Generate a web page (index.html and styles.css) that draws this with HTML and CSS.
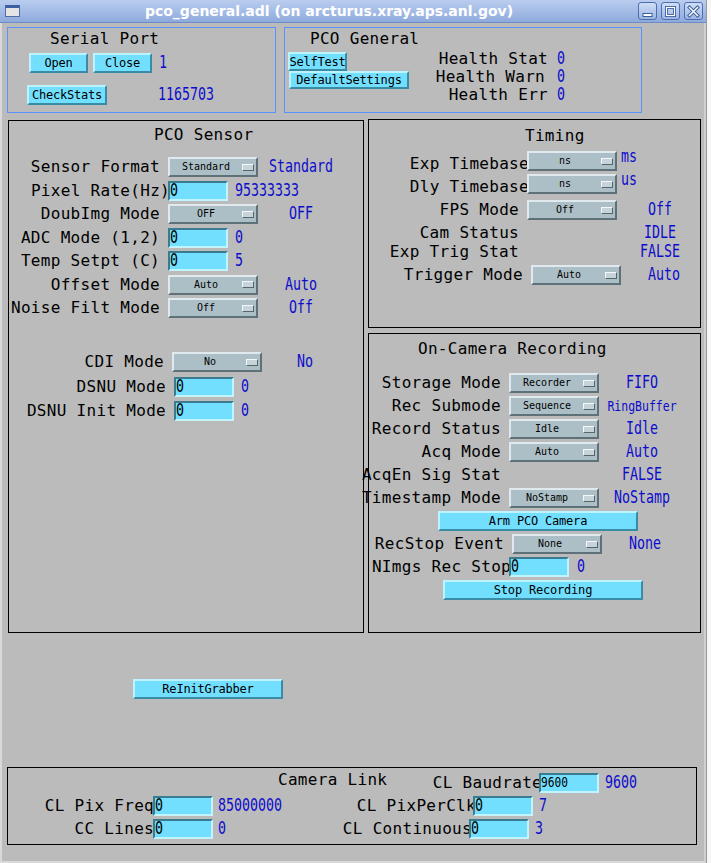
FILE: index.html
```html
<!DOCTYPE html>
<html>
<head>
<meta charset="utf-8">
<title>pco_general.adl</title>
<link rel="stylesheet" href="styles.css">
</head>
<body>
<div class="screen">
  <div class="win">
    <header class="titlebar">
      <span class="winicon"></span>
      <span class="wtitle">pco_general.adl (on arcturus.xray.aps.anl.gov)</span>
      <span class="wbtns">
        <span class="wbtn"><svg width="13" height="13" viewBox="0 0 13 13"><rect x="2" y="8.5" width="9" height="3" fill="#fff" stroke="#3b5c9c" stroke-width="1"/></svg></span>
        <span class="wbtn"><svg width="13" height="13" viewBox="0 0 13 13"><rect x="2.5" y="2.5" width="8" height="8" fill="none" stroke="#3b5c9c" stroke-width="3"/><rect x="2.5" y="2.5" width="8" height="8" fill="none" stroke="#fff" stroke-width="1.2"/></svg></span>
        <span class="wbtn"><svg width="13" height="13" viewBox="0 0 13 13"><path d="M2.5 2.5 L10.5 10.5 M10.5 2.5 L2.5 10.5" stroke="#3b5c9c" stroke-width="3.4" stroke-linecap="square"/><path d="M2.5 2.5 L10.5 10.5 M10.5 2.5 L2.5 10.5" stroke="#fff" stroke-width="1.5" stroke-linecap="square"/></svg></span>
      </span>
    </header>
    <div class="frame">
      <div class="toprow">
        <section class="panel blue serial">
          <div class="ptitle">Serial Port</div>
          <div class="srow s1"><span class="btn w59">Open</span><span class="btn w59 closebtn">Close</span><span class="val sv1">1</span></div>
          <div class="srow s2"><span class="btn w80">CheckStats</span><span class="val sv2">1165703</span></div>
        </section>
        <section class="panel blue general">
          <div class="ptitle">PCO General</div>
          <div class="gbody">
            <div class="gbtns">
              <span class="btn selftest">SelfTest</span>
              <span class="btn defset">DefaultSettings</span>
            </div>
            <div class="health">
              <span class="hl">Health Stat</span><span class="val">0</span>
              <span class="hl warn">Health Warn</span><span class="val">0</span>
              <span class="hl">Health Err</span><span class="val">0</span>
            </div>
          </div>
        </section>
      </div>

      <div class="midrow">
        <section class="panel sensor">
          <div class="ptitle">PCO Sensor</div>
          <div class="rows g1">
            <div class="row"><span class="lbl">Sensor Format</span><span class="menu"><span class="mt">Standard</span><span class="ind"></span></span><span class="val c">Standard</span></div>
            <div class="row"><span class="lbl ov">Pixel Rate(Hz)</span><span class="entry"><span class="et">0</span></span><span class="val l">95333333</span></div>
            <div class="row"><span class="lbl">DoubImg Mode</span><span class="menu"><span class="mt">OFF</span><span class="ind"></span></span><span class="val c">OFF</span></div>
            <div class="row"><span class="lbl">ADC Mode (1,2)</span><span class="entry"><span class="et">0</span></span><span class="val l">0</span></div>
            <div class="row"><span class="lbl">Temp Setpt (C)</span><span class="entry"><span class="et">0</span></span><span class="val l">5</span></div>
            <div class="row"><span class="lbl">Offset Mode</span><span class="menu"><span class="mt">Auto</span><span class="ind"></span></span><span class="val c">Auto</span></div>
            <div class="row"><span class="lbl">Noise Filt Mode</span><span class="menu"><span class="mt">Off</span><span class="ind"></span></span><span class="val c">Off</span></div>
          </div>
          <div class="rows g2">
            <div class="row sh4"><span class="lbl">CDI Mode</span><span class="menu"><span class="mt">No</span><span class="ind"></span></span><span class="val c">No</span></div>
            <div class="row sh6"><span class="lbl">DSNU Mode</span><span class="entry"><span class="et">0</span></span><span class="val l">0</span></div>
            <div class="row sh6"><span class="lbl">DSNU Init Mode</span><span class="entry"><span class="et">0</span></span><span class="val l">0</span></div>
          </div>
        </section>

        <div class="rcol">
          <section class="panel timing">
            <div class="ptitle">Timing</div>
            <div class="rows">
              <div class="row"><span class="lbl ov low">Exp Timebase</span><span class="menu"><span class="mt">ns</span><span class="ind"></span></span><span class="val unit">ms</span></div>
              <div class="row"><span class="lbl ov low">Dly Timebase</span><span class="menu"><span class="mt">ns</span><span class="ind"></span></span><span class="val unit">us</span></div>
              <div class="row mt3"><span class="lbl">FPS Mode</span><span class="menu"><span class="mt">Off</span><span class="ind"></span></span><span class="val c">Off</span></div>
              <div class="row"><span class="lbl">Cam Status</span><span class="sp"></span><span class="val c">IDLE</span></div>
              <div class="row mtm4"><span class="lbl">Exp Trig Stat</span><span class="sp"></span><span class="val c">FALSE</span></div>
              <div class="row sh4"><span class="lbl">Trigger Mode</span><span class="menu"><span class="mt">Auto</span><span class="ind"></span></span><span class="val c">Auto</span></div>
            </div>
          </section>

          <section class="panel oncam">
            <div class="ptitle">On-Camera Recording</div>
            <div class="rows">
              <div class="row"><span class="lbl">Storage Mode</span><span class="menu"><span class="mt">Recorder</span><span class="ind"></span></span><span class="val c">FIFO</span></div>
              <div class="row"><span class="lbl">Rec Submode</span><span class="menu"><span class="mt">Sequence</span><span class="ind"></span></span><span class="val c sm">RingBuffer</span></div>
              <div class="row"><span class="lbl">Record Status</span><span class="menu"><span class="mt">Idle</span><span class="ind"></span></span><span class="val c">Idle</span></div>
              <div class="row"><span class="lbl">Acq Mode</span><span class="menu"><span class="mt">Auto</span><span class="ind"></span></span><span class="val c">Auto</span></div>
              <div class="row"><span class="lbl">AcqEn Sig Stat</span><span class="sp"></span><span class="val c">FALSE</span></div>
              <div class="row"><span class="lbl">Timestamp Mode</span><span class="menu"><span class="mt">NoStamp</span><span class="ind"></span></span><span class="val c">NoStamp</span></div>
              <div class="row arm"><span class="btn w200">Arm PCO Camera</span></div>
              <div class="row sh3"><span class="lbl">RecStop Event</span><span class="menu"><span class="mt">None</span><span class="ind"></span></span><span class="val c">None</span></div>
              <div class="row"><span class="lbl ov">NImgs Rec Stop</span><span class="entry"><span class="et">0</span></span><span class="val l8">0</span></div>
              <div class="row stoprec"><span class="btn w200">Stop Recording</span></div>
            </div>
          </section>
        </div>
      </div>

      <div class="reinit"><span class="btn w150">ReInitGrabber</span></div>

      <section class="panel camlink">
        <div class="clrow"><span class="cltitle">Camera Link</span><span class="lbl bw">CL Baudrate</span><span class="entry"><span class="et small">9600</span></span><span class="val l6">9600</span></div>
        <div class="clrow"><span class="lbl l1">CL Pix Freq</span><span class="entry"><span class="et">0</span></span><span class="val cv">85000000</span><span class="lbl l2">CL PixPerClk</span><span class="entry"><span class="et">0</span></span><span class="val l6">7</span></div>
        <div class="clrow"><span class="lbl l1">CC Lines</span><span class="entry"><span class="et">0</span></span><span class="val cv">0</span><span class="lbl l3">CL Continuous</span><span class="entry"><span class="et">0</span></span><span class="val l6">3</span></div>
      </section>
    </div>
  </div>
  <div class="desk"></div>
</div>
</body>
</html>
```

FILE: styles.css
```css
* { box-sizing: border-box; }
html, body { margin: 0; padding: 0; }
body {
  width: 711px;
  height: 863px;
  overflow: hidden;
  background: #f4f4f4;
  font-family: "DejaVu Sans Mono", "Liberation Mono", monospace;
  font-size: 16px;
  color: #000;
}
.screen { display: flex; width: 711px; height: 863px; }
.win {
  width: 706px;
  height: 863px;
  display: flex;
  flex-direction: column;
  flex: none;
}

/* ---------- title bar ---------- */
.titlebar {
  height: 23px;
  flex: none;
  display: flex;
  align-items: center;
  background: linear-gradient(#bacdef, #8eaadc);
  border-bottom: 1px solid #6c8cc6;
}
.winicon {
  width: 15px;
  height: 12px;
  margin-left: 5px;
  flex: none;
  background: #e4e4e2;
  border: 1px solid #4d6cab;
  border-top: 3px solid #3e5f9f;
}
.wtitle {
  flex: 1;
  text-align: center;
  font-family: "DejaVu Sans", "Liberation Sans", sans-serif;
  font-weight: bold;
  font-size: 14px;
  line-height: 23px;
  color: #fff;
  white-space: nowrap;
  padding-right: 0;
}
.wbtns { display: flex; gap: 4px; margin-right: 3px; flex: none; }
.wbtn {
  width: 19px;
  height: 18px;
  border: 1px solid #4e6ead;
  border-radius: 3px;
  background: linear-gradient(#d0def6, #9ab5e3);
  display: flex;
  align-items: center;
  justify-content: center;
}
.wbtn svg { display: block; }

/* ---------- window body ---------- */
.frame {
  flex: 1;
  background: #bbbbbb;
  border-left: 2px solid #d9d9d9;
  border-right: 2px solid #cfcfcf;
  border-bottom: 2px solid #d9d9d9;
  display: flex;
  flex-direction: column;
  align-items: flex-start;
}
.desk { flex: 1; background: #f6f6f6; border-left: 1px solid #9a9a9a; }

.panel { border: 1px solid #000; flex: none; display: flex; flex-direction: column; }
.panel.blue { border-color: #5893ff; }
.ptitle { line-height: 16px; letter-spacing: 0.3px; white-space: nowrap; }

/* ---------- controls ---------- */
.btn {
  display: flex;
  align-items: center;
  justify-content: center;
  flex: none;
  height: 20px;
  background: #73dfff;
  border: 2px solid;
  border-color: #bdf2ff #3a8ba5 #3a8ba5 #bdf2ff;
  font-size: 12px;
  letter-spacing: -0.2px;
  line-height: 14px;
  white-space: nowrap;
}
.w59 { width: 59px; }
.w80 { width: 80px; }
.w150 { width: 150px; }
.w200 { width: 200px; }

.menu {
  display: flex;
  align-items: center;
  flex: none;
  width: 90px;
  height: 20px;
  background: #adbfc6;
  border: 2px solid;
  border-color: #e0e9ed #5f7178 #5f7178 #e0e9ed;
  font-size: 10px;
  line-height: 12px;
}
.mt { flex: 1; text-align: center; white-space: nowrap; }
.ind {
  width: 12px;
  height: 7px;
  margin-right: 2px;
  flex: none;
  background: #c6d3d8;
  border: 1px solid;
  border-color: #f4f8fa #55666c #55666c #f4f8fa;
}
.entry {
  display: flex;
  align-items: center;
  flex: none;
  width: 60px;
  height: 20px;
  background: #73dfff;
  border: 2px solid;
  border-color: #3a7b90 #c2f4ff #c2f4ff #3a7b90;
}
.et {
  display: inline-block;
  font-size: 13.3px;
  line-height: 16px;
  transform: scaleY(1.3);
}
.et.small { font-size: 11.2px; transform: scaleY(1.2); }
.sp { width: 90px; flex: none; }

.val {
  display: inline-block;
  flex: none;
  color: #0c0ccc;
  font-size: 13.3px;
  line-height: 16px;
  white-space: nowrap;
  transform: scaleY(1.3);
}
.val.c { width: 86px; text-align: center; }
.val.sm { font-size: 11.5px; transform: scaleY(1.2); }
.val.l { margin-left: 7px; }
.val.l6 { margin-left: 6px; }
.val.l8 { margin-left: 8px; }

.lbl {
  display: flex;
  justify-content: flex-end;
  flex: none;
  white-space: nowrap;
  line-height: 16px;
  letter-spacing: 0.3px;
  margin-right: 8px;
}
.lbl.low { align-self: flex-start; margin-top: 5px; }

.rows { display: flex; flex-direction: column; }
.row { display: flex; align-items: center; height: 20px; flex: none; }
.sh3 { padding-left: 3px; }
.sh4 { padding-left: 4px; }
.sh6 { padding-left: 6px; }
.mt3 { margin-top: 3px; }
.mtm4 { margin-top: -4px; }

/* ---------- top row ---------- */
.toprow { display: flex; gap: 8px; margin: 4px 0 0 5px; }
.serial { width: 269px; height: 86px; }
.serial .ptitle { margin-top: 2.5px; padding-left: 42px; }
.srow { display: flex; align-items: center; height: 20px; }
.s1 { margin-top: 6.5px; padding-left: 21px; }
.closebtn { margin-left: 5px; }
.sv1 { margin-left: 7px; }
.s2 { margin-top: 12px; padding-left: 19px; }
.sv2 { margin-left: 51px; }

.general { width: 358px; height: 86px; }
.general .ptitle { margin-top: 2.5px; padding-left: 25px; }
.gbody { display: flex; margin-top: 5.5px; }
.gbtns { width: 130px; flex: none; display: flex; flex-direction: column; align-items: flex-start; }
.selftest { width: 59px; height: 19px; margin-left: 3px; }
.defset { width: 120px; height: 18px; margin-left: 4px; }
.health {
  display: grid;
  grid-template-columns: 133px auto;
  column-gap: 9px;
  margin-top: -1.6px;
  line-height: 18px;
}
.hl { text-align: right; white-space: nowrap; letter-spacing: 0.3px; }
.hl.warn { padding-right: 3px; }
.health .val { line-height: 18px; }

/* ---------- middle ---------- */
.midrow { display: flex; gap: 4px; margin: 6px 0 0 6px; }
.sensor { width: 356px; height: 513px; margin-top: 1px; }
.sensor .ptitle { margin-top: 5.5px; padding-left: 145px; }
.sensor .g1 { margin-top: 14.5px; gap: 3.5px; }
.sensor .g2 { margin-top: 34px; gap: 4.5px; }
.sensor .lbl { width: 151px; }
.sensor .lbl.ov { width: 161px; margin-right: -2px; }

.rcol { display: flex; flex-direction: column; gap: 5px; }
.timing { width: 333px; height: 209px; }
.timing .ptitle { margin-top: 7.5px; padding-left: 156px; }
.timing .rows { margin-top: 7.5px; gap: 3px; }
.timing .lbl { width: 150px; }
.timing .lbl.ov { width: 160px; margin-right: -2px; }
.val.unit { margin-left: 4px; align-self: flex-start; margin-top: -2px; }

.oncam { width: 333px; height: 300px; }
.oncam .ptitle { margin-top: 6.5px; padding-left: 49px; }
.oncam .rows { margin-top: 16.5px; gap: 3px; }
.oncam .lbl { width: 132px; }
.oncam .lbl.ov { width: 142px; margin-right: -2px; }
.arm { padding-left: 69px; }
.stoprec { padding-left: 74px; }

/* ---------- bottom ---------- */
.reinit { margin-top: 46px; padding-left: 131px; display: flex; }

.camlink { width: 690px; height: 78px; margin: 68px 0 0 5px; padding-top: 5px; gap: 3px; }
.clrow { display: flex; align-items: center; height: 20px; flex: none; }
.cltitle {
  width: 379px;
  padding-left: 270px;
  flex: none;
  align-self: flex-start;
  margin-top: -1.5px;
  line-height: 16px;
  white-space: nowrap;
  letter-spacing: 0.3px;
}
.camlink .bw { width: 155px; margin-right: -3px; }
.camlink .l1 { width: 146px; margin-right: -1px; }
.camlink .l2 { width: 176px; margin-right: -3px; }
.camlink .l3 { width: 172px; margin-right: -3px; }
.val.cv { width: 87px; padding-left: 5px; }
```
